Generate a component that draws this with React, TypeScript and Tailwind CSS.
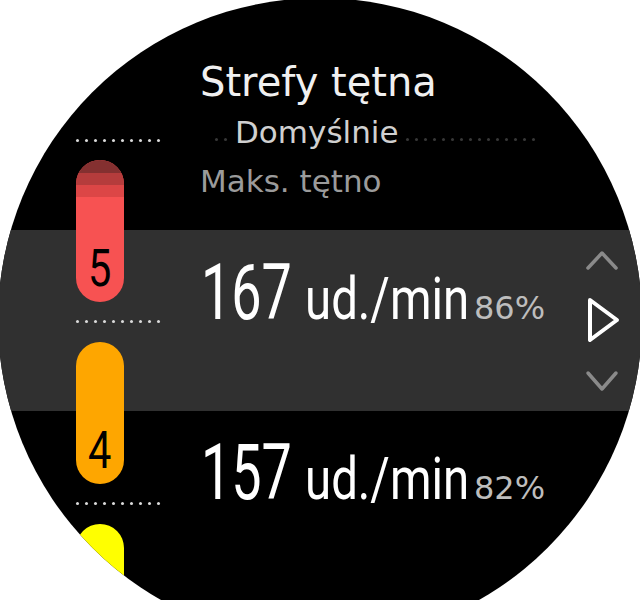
import React from 'react';

type Zone = { num: number; bpm: number; pct: number };

const zones: Zone[] = [
  { num: 5, bpm: 167, pct: 86 },
  { num: 4, bpm: 157, pct: 82 },
];

// rząd kropek oddzielający strefy
const Dots = ({ count, dim, className = '' }: { count: number; dim?: boolean; className?: string }) => (
  <div className={`flex gap-[6px] ${className}`}>
    {Array.from({ length: count }).map((_, i) => (
      <span
        key={i}
        className={dim ? 'h-[3px] w-[3px] rounded-full bg-[#383838]' : 'h-[3px] w-[3px] rounded-full bg-[#dadada]'}
      />
    ))}
  </div>
);

const ZoneDigit = ({ n }: { n: number }) => (
  <div className="flex flex-1 items-end justify-center pb-[7px]">
    <span className="inline-block scale-x-[0.8] font-['Roboto',sans-serif] text-[52px] leading-none text-black">{n}</span>
  </div>
);

const BpmRow = ({ zone, className = '' }: { zone: Zone; className?: string }) => (
  <div className={`flex items-baseline pl-[3px] leading-none ${className}`}>
    <span className="w-[104px] whitespace-nowrap font-['Roboto',sans-serif] text-[77px] text-white">
      <span className="inline-block origin-left scale-x-[0.7]">{zone.bpm}</span>
    </span>
    <span className="w-[169px] whitespace-nowrap font-['Roboto',sans-serif] text-[60px] text-white">
      <span className="inline-block origin-left scale-x-[0.79]">ud./min</span>
    </span>
    <span className="whitespace-nowrap font-['DejaVu_Sans',sans-serif] text-[32px] text-[#bdbdbd]">{zone.pct}%</span>
  </div>
);

export default function App() {
  return (
    <div className="h-[600px] w-[640px] overflow-hidden bg-white">
      <div className="-ml-[2px] -mt-[2px] h-[644px] w-[644px] overflow-hidden rounded-full bg-black">
        <div className="ml-[2px] mt-[2px] grid w-[640px]">
          {/* zaznaczony wiersz */}
          <div className="flex flex-col [grid-area:1/1]">
            <div className="h-[230px]" />
            <div className="h-[181px] bg-[#303030]" />
          </div>

          <div className="flex [grid-area:1/1]">
            {/* kolumna stref */}
            <div className="ml-[76px] flex w-[84px] flex-col pt-[139px]">
              <Dots count={10} />
              <div className="mt-[18px] flex h-[142px] w-[48px] flex-col overflow-hidden rounded-full bg-[#f75252]">
                <div className="h-[13px] shrink-0 bg-[#843030]" />
                <div className="h-[12px] shrink-0 bg-[#b53c3c]" />
                <div className="h-[12px] shrink-0 bg-[#dc4646]" />
                <ZoneDigit n={zones[0].num} />
              </div>
              <Dots count={10} className="mt-[18px]" />
              <div className="mt-[19px] flex h-[142px] w-[48px] flex-col overflow-hidden rounded-full bg-[#fea600]">
                <ZoneDigit n={zones[1].num} />
              </div>
              <Dots count={10} className="mt-[18px]" />
              <div className="mt-[19px] h-[142px] w-[48px] rounded-full bg-[#ffff00]" />
            </div>

            {/* tekst */}
            <div className="ml-[38px] flex flex-1 flex-col pt-[62px] font-['DejaVu_Sans',sans-serif]">
              <div className="pl-[2px] text-[40px] leading-[40px] text-[#f0f0f0]">Strefy tętna</div>
              <div className="mt-[15px] flex items-end">
                <Dots count={2} dim className="mb-[7px] ml-[17px]" />
                <span className="ml-[8px] text-[31px] leading-[31px] text-[#d0d0d0]">Domyślnie</span>
                <Dots count={15} dim className="mb-[7px] ml-[8px]" />
              </div>
              <div className="mt-[18px] pl-[2px] text-[31px] leading-[31px] text-[#9b9b9b]">Maks. tętno</div>
              <BpmRow zone={zones[0]} className="mt-[58px]" />
              <BpmRow zone={zones[1]} className="mt-[103px]" />
            </div>

            {/* strzałki */}
            <div className="mr-[18px] flex w-[40px] flex-col items-center pt-[249px]">
              <svg width="34" height="22" viewBox="0 0 34 22" fill="none">
                <polyline points="3,19 17,4 31,19" stroke="#8a8a8a" strokeWidth="3.5" strokeLinecap="round" strokeLinejoin="round" />
              </svg>
              <svg className="mt-[25px] ml-[4px]" width="36" height="48" viewBox="0 0 36 48" fill="none">
                <path d="M4 4 L31 24 L4 44 Z" stroke="#ffffff" strokeWidth="4" strokeLinejoin="round" />
              </svg>
              <svg className="mt-[25px]" width="34" height="24" viewBox="0 0 34 24" fill="none">
                <polyline points="3,4 17,20 31,4" stroke="#8a8a8a" strokeWidth="3.5" strokeLinecap="round" strokeLinejoin="round" />
              </svg>
            </div>
          </div>
        </div>
      </div>
    </div>
  );
}
